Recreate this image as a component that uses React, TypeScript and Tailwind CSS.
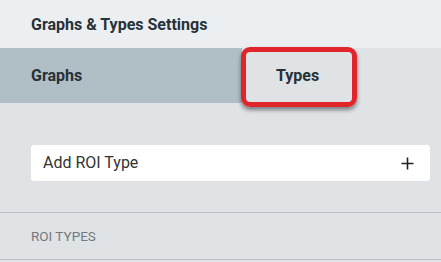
import React from "react";

const App: React.FC = () => {
  return (
    <div
      className="w-[441px] h-[262px] overflow-hidden bg-[#dfe3e6] text-[#263238]"
      style={{ fontFamily: "Roboto, 'Noto Sans', sans-serif" }}
    >
      <header className="h-[48px] bg-[#eceff1] px-[31px] pt-[2px] flex items-center">
        <h1 className="text-[16px] font-bold leading-none">
          Graphs &amp; Types Settings
        </h1>
      </header>

      <nav className="h-[55px] flex">
        <button className="w-[242px] bg-[#b0bec5] pl-[31px] pt-[1px] flex items-center text-[16px] font-bold text-[#263238]">
          Graphs
        </button>
        <button className="relative w-[115px] pt-[1px] pr-[4px] flex items-center justify-center text-[16px] font-bold text-[#263238]">
          Types
          <span className="absolute -top-px bottom-[-4px] -left-px right-0 rounded-[9px] border-[5px] border-[#e1262b] shadow-[0_3px_4px_rgba(0,0,0,0.45)]" />
        </button>
      </nav>

      <main className="pt-[42px]">
        <div className="ml-[31px] mr-[11px] h-[36px] bg-white rounded-[3px] flex items-center justify-between pl-[12px] pr-[16px]">
          <span className="text-[16px] text-[#333]">Add ROI Type</span>
          <svg width="13" height="13" viewBox="0 0 13 13" className="text-[#222]">
            <path d="M6.5 0.5v12M0.5 6.5h12" stroke="currentColor" strokeWidth="1.6" />
          </svg>
        </div>

        <div className="mt-[31px] border-t border-b border-[#b9bfc4] h-[48px] pl-[31px] flex items-center">
          <span className="text-[13.5px] uppercase text-[#74787c]">ROI Types</span>
        </div>
      </main>
    </div>
  );
};

export default App;
